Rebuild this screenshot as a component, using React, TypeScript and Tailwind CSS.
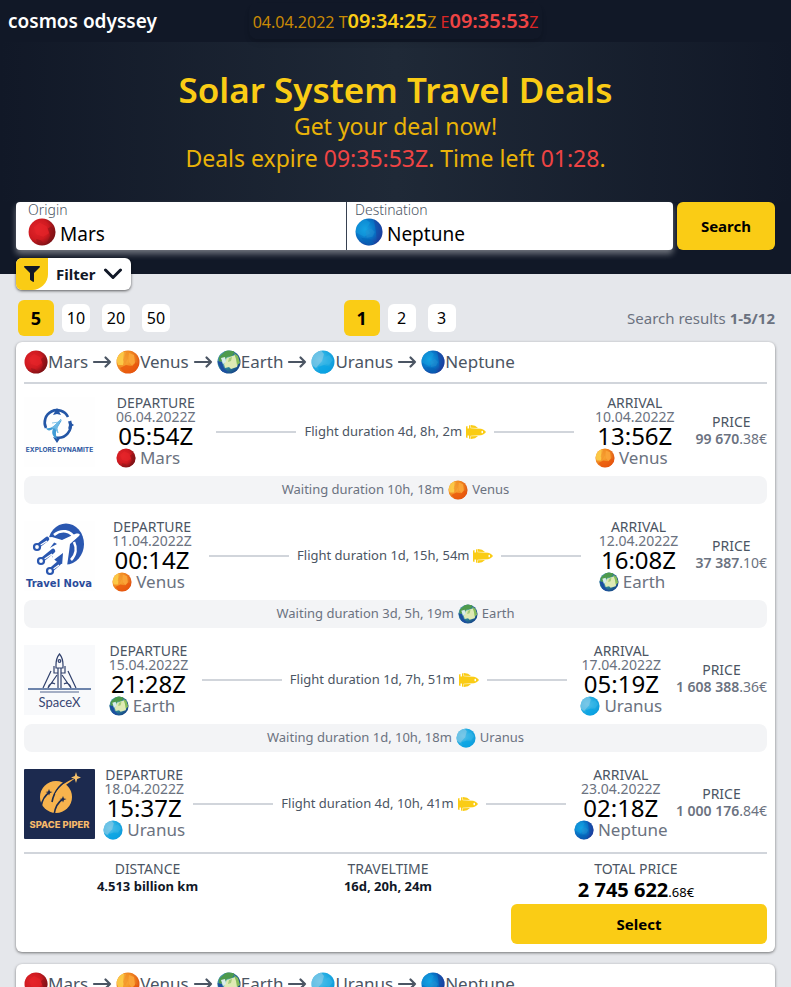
import { useId, type ReactNode } from "react";
import { FaFilter } from "react-icons/fa";

type PlanetName = "Mars" | "Venus" | "Earth" | "Uranus" | "Neptune";

const planetArt: Record<PlanetName, { light: string; mid: string; dark: string; marks: ReactNode }> = {
  Mars: {
    light: "#e2252b",
    mid: "#cf1a20",
    dark: "#701014",
    marks: (
      <>
        <path d="M5 8l5-4 6 3 2 6-5 3-6-2z" fill="#e8242a" opacity=".6" />
        <path d="M17 9l3-2 4 5-2 7-6 3 3-7z" fill="#7d1216" opacity=".5" />
        <path d="M7 18l4 1 3 4-6-1z" fill="#8e1519" opacity=".5" />
      </>
    ),
  },
  Venus: {
    light: "#fbb13a",
    mid: "#f28a22",
    dark: "#d9480f",
    marks: (
      <>
        <path d="M0 9l5-7 5 0-2 6-1 7-5 0z" fill="#fcd34d" opacity=".8" />
        <path d="M8 2l4 0 0 7-3 5-2-4z" fill="#f0902a" opacity=".6" />
        <path d="M4 18l6-3 5 1 4-4 4 3-5 8H9z" fill="#ea580c" opacity=".8" />
        <path d="M13 3l5 2 1 8-3 3-3-4z" fill="#fba53a" opacity=".9" />
      </>
    ),
  },
  Earth: {
    light: "#8fd0cf",
    mid: "#2a7f94",
    dark: "#123c86",
    marks: (
      <>
        <path d="M2 7l8-7 8 1-3 5-5 1-3 4-5 1z" fill="#4d9a4c" />
        <path d="M0 11l5 1 2 6 5 5-7-1z" fill="#1d4fa0" />
        <path d="M10 8l8-3 4 5-2 7-6 2-2-2-4 1-1-4z" fill="#dfeab4" />
        <path d="M4 8l4-1 1 5-3 2z" fill="#d8ecea" />
        <path d="M17 3l4 3 2 7-3 2-1-6z" fill="#86bd5a" />
        <path d="M12 8l3-1-1 4-3 1z" fill="#a5cc78" />
      </>
    ),
  },
  Uranus: {
    light: "#5cc3ea",
    mid: "#22ade3",
    dark: "#0a98da",
    marks: (
      <>
        <path d="M0 7l9-8 4 5-2 7-6 7-6-4z" fill="#8fcbe6" opacity=".6" />
        <path d="M12 8l6-3 4 5-4 5-6-2z" fill="#3bb8e8" opacity=".5" />
        <path d="M7 17l6-2 7 2-4 7H9z" fill="#08a4e4" opacity=".7" />
      </>
    ),
  },
  Neptune: {
    light: "#17a5e6",
    mid: "#0871c4",
    dark: "#1c3596",
    marks: (
      <>
        <path d="M0 7l8-7 5 4-3 5 3 4-5 3-8-4z" fill="#129fe0" opacity=".5" />
        <path d="M9 11l5-2 3 3-2 4-5 1z" fill="#2590d0" opacity=".5" />
        <path d="M16 0l9 6v9l-6 6-1-9z" fill="#1c3f9f" opacity=".5" />
        <path d="M5 17l8 1 4 4-6 2z" fill="#0464b5" opacity=".6" />
      </>
    ),
  },
};

function Planet({ name, className }: { name: PlanetName; className: string }) {
  const id = useId();
  const art = planetArt[name];
  return (
    <svg viewBox="0 0 24 24" className={`shrink-0 ${className}`} aria-hidden="true">
      <defs>
        <radialGradient id={`${id}g`} cx=".36" cy=".4" r=".68">
          <stop offset="0" stopColor={art.light} />
          <stop offset=".55" stopColor={art.mid} />
          <stop offset="1" stopColor={art.dark} />
        </radialGradient>
        <clipPath id={`${id}c`}>
          <circle cx="12" cy="12" r="11.5" />
        </clipPath>
      </defs>
      <g clipPath={`url(#${id}c)`}>
        <rect width="24" height="24" fill={`url(#${id}g)`} />
        {art.marks}
      </g>
    </svg>
  );
}

function Arrow() {
  return (
    <svg viewBox="0 0 20 14" className="mx-1 h-3.5 w-5 shrink-0" fill="none" stroke="#4b5563" strokeWidth="2.2" strokeLinecap="round" strokeLinejoin="round" aria-hidden="true">
      <path d="M2 7h16M13.500 2.500L18 7l-4.500 4.500" />
    </svg>
  );
}

function Rocket() {
  return (
    <svg viewBox="0 0 20 14" className="h-3.5 w-5 shrink-0" fill="#facc15" aria-hidden="true">
      <path d="M0 1.500L1.500 1v2.500H3V.5L4.500 0v3.200L10 3.500l5 .2c2.200.4 4 2 5 3.300-1 1.300-2.800 2.900-5 3.300l-5 .2-5.500.3V14L3 13.500v-3H1.500V13L0 12.500z" />
      <path d="M5 0l4 .8L12 3l-7-.3zM5 14l4-.8 3-2.200-7 .3z" />
      <path d="M15.500 6a1.100 1.100 0 1 1 0 2z" fill="#fff" />
    </svg>
  );
}

function ExploreDynamite() {
  return (
    <svg viewBox="0 0 71 70" className="h-[70px] w-[71px] shrink-0" role="img" aria-label="Explore Dynamite">
      <rect width="71" height="70" fill="#fefefe" />
      <path d="M22 31a12 12 0 0 1 22-11M46 24a12.500 12.500 0 0 1-14 16.500" fill="none" stroke="#2456a6" strokeWidth="2.600" />
      <path d="M33 11l4 7-4-1-4 1zM50 28l-6 4 1-4-1-4zM33 46l-4-6 4 1 4-1z" fill="#2456a6" />
      <path d="M22 31c5 1 8-2 11-5l5-3-3 5c-3 4-4 8-2 14-4-2-6-6-4-10-3 2-6 2-7-1z" fill="#3f9bd6" />
      <path d="M28 31l9-9-4 9 1 5-3-5zM28 26l7-1" stroke="#6fb9e4" fill="#6fb9e4" strokeWidth=".8" />
      <text x="35.500" y="55" textAnchor="middle" fontSize="6.6" fontWeight="700" fill="#2d57a0" fontFamily="Inter, sans-serif">EXPLORE DYNAMITE</text>
    </svg>
  );
}

function TravelNova() {
  return (
    <svg viewBox="0 0 71 70" className="h-[70px] w-[71px] shrink-0" role="img" aria-label="Travel Nova">
      <rect width="71" height="70" fill="#fefefe" />
      <ellipse cx="42" cy="23" rx="18" ry="20.500" fill="#2a57b0" />
      <path d="M30 14c7-6 17-5 21 4M50 21c3 6 2 13-3 18" fill="none" stroke="#fff" strokeWidth="2.600" />
      <path d="M18 40V19l7-3 7 3-6 8 8 2-6 7z" fill="#fff" />
      <path d="M22 17l6-1 10 3 13-6c4-1 6 0 4 2L46 23l-1 8-2 14h-5l1-13-12 9 3-10-8-2 11-6z" fill="#fff" />
      <path d="M14 25l9-7M18 39l11-9M27 49l8-7" stroke="#2a57b0" strokeWidth="4.500" strokeLinecap="round" />
      <path d="M15 25l8-5M19 39l9-6M28 49l7-5" stroke="#fff" strokeWidth="1.300" />
      <g fill="#fff" stroke="#2a57b0" strokeWidth="2.200">
        <circle cx="13" cy="26" r="3" />
        <circle cx="17" cy="40" r="3" />
        <circle cx="26" cy="50" r="3" />
      </g>
      <text x="35" y="66" textAnchor="middle" fontSize="10" fontWeight="700" fill="#2a4b9b" fontFamily="'DejaVu Sans', sans-serif">Travel Nova</text>
    </svg>
  );
}

function SpaceX() {
  return (
    <svg viewBox="0 0 71 70" className="h-[70px] w-[71px] shrink-0" role="img" aria-label="SpaceX">
      <rect width="71" height="70" fill="#f8f9fb" />
      <g fill="none" stroke="#30406c" strokeWidth="1.200">
        <path d="M32 20c0-5 1-8 3.500-11C38 12 39 15 39 20v3h-7zM34 23v20M37 23v20" />
        <circle cx="35.500" cy="16" r="1.300" />
        <path d="M30 21v7h4M41 21v7h-4M27 26L19 43M44 26l8 17M33 30l-9 13M38 30l9 13M24 43c1-4 4-6 7-4M47 43c-1-4-4-6-7-4" />
        <path d="M4 44h63" strokeWidth="1.600" stroke="#3f5d91" />
        <path d="M16 47h39" stroke="#50658e" />
      </g>
      <text x="35.500" y="62" textAnchor="middle" fontSize="13" fill="#384773" fontFamily="Lato, sans-serif">SpaceX</text>
    </svg>
  );
}

function SpacePiper() {
  return (
    <svg viewBox="0 0 71 70" className="h-[70px] w-[71px] shrink-0" role="img" aria-label="Space Piper">
      <rect width="71" height="70" rx="1" fill="#1c2a4f" />
      <circle cx="32" cy="28" r="16" fill="#f7b34d" />
      <g fill="none" stroke="#1c2a4f" strokeWidth="1.600">
        <path d="M28 33c2-11 9-20 20-23M17 38c1-7 4-12 9-15M30 46c1-8 4-13 9-16" />
      </g>
      <path d="M31 25c4-7 11-13 21-16-8 5-14 9-18 16z" fill="#f7b34d" />
      <path d="M52 3l1.200 4L57 8.500 53.200 10 52 14l-1.200-4L47 8.500 50.800 7z" fill="#f7c26b" />
      <path d="M25 20l1 2.500 2.500.5-2.500 1-1 2.500-1-2.500-2.500-1 2.500-.5zM39 27l1 2.500 2.500.5-2.500 1-1 2.500-1-2.500-2.500-1 2.500-.5z" fill="#1c2a4f" />
      <text x="35.500" y="59" textAnchor="middle" fontSize="9.4" fontWeight="800" fill="#f7b96a" fontFamily="Inter, sans-serif">SPACE PIPER</text>
    </svg>
  );
}

type Stop = { date: string; time: string; planet: PlanetName };
type Leg = {
  logo: ReactNode;
  from: Stop;
  to: Stop;
  duration: string;
  price: string;
  cents: string;
  wait?: string;
};

const legs: Leg[] = [
  {
    logo: <ExploreDynamite />,
    from: { date: "06.04.2022Z", time: "05:54Z", planet: "Mars" },
    to: { date: "10.04.2022Z", time: "13:56Z", planet: "Venus" },
    duration: "4d, 8h, 2m",
    price: "99 670",
    cents: ".38€",
    wait: "10h, 18m",
  },
  {
    logo: <TravelNova />,
    from: { date: "11.04.2022Z", time: "00:14Z", planet: "Venus" },
    to: { date: "12.04.2022Z", time: "16:08Z", planet: "Earth" },
    duration: "1d, 15h, 54m",
    price: "37 387",
    cents: ".10€",
    wait: "3d, 5h, 19m",
  },
  {
    logo: <SpaceX />,
    from: { date: "15.04.2022Z", time: "21:28Z", planet: "Earth" },
    to: { date: "17.04.2022Z", time: "05:19Z", planet: "Uranus" },
    duration: "1d, 7h, 51m",
    price: "1 608 388",
    cents: ".36€",
    wait: "1d, 10h, 18m",
  },
  {
    logo: <SpacePiper />,
    from: { date: "18.04.2022Z", time: "15:37Z", planet: "Uranus" },
    to: { date: "23.04.2022Z", time: "02:18Z", planet: "Neptune" },
    duration: "4d, 10h, 41m",
    price: "1 000 176",
    cents: ".84€",
  },
];

const route: PlanetName[] = ["Mars", "Venus", "Earth", "Uranus", "Neptune"];

function StopInfo({ label, stop }: { label: string; stop: Stop }) {
  return (
    <div className="flex flex-col items-center whitespace-nowrap">
      <span className="text-sm leading-[14px] text-[#4b5563]">{label}</span>
      <span className="text-sm leading-[14px] text-[#6b7280]">{stop.date}</span>
      <span className="text-2xl leading-6 text-black">{stop.time}</span>
      <span className="flex items-center gap-1 self-start text-[17px] leading-5 text-[#6b7280]">
        <Planet name={stop.planet} className="size-5" />
        {stop.planet}
      </span>
    </div>
  );
}

function LegRow({ leg }: { leg: Leg }) {
  return (
    <>
      <div className="flex items-center justify-between py-2">
        {leg.logo}
        <StopInfo label="DEPARTURE" stop={leg.from} />
        <div className="flex items-center gap-2">
          <span className="h-0.5 w-20 bg-[#d1d5db]" />
          <span className="flex items-center gap-1 text-[13px] whitespace-nowrap text-[#4b5563]">
            Flight duration {leg.duration}
            <Rocket />
          </span>
          <span className="h-0.5 w-20 bg-[#d1d5db]" />
        </div>
        <StopInfo label="ARRIVAL" stop={leg.to} />
        <div className="flex flex-col items-center pb-1 text-sm leading-[17px] whitespace-nowrap">
          <span className="text-[#4b5563]">PRICE</span>
          <span className="text-[#6b7280]">
            <b className="font-semibold">{leg.price}</b>
            {leg.cents}
          </span>
        </div>
      </div>
      {leg.wait && (
        <div className="mb-2 flex h-7 items-center justify-center gap-1 rounded-lg bg-[#f3f4f6] text-[13px] text-[#6b7280]">
          Waiting duration {leg.wait}
          <Planet name={leg.to.planet} className="size-5" />
          {leg.to.planet}
        </div>
      )}
    </>
  );
}

function RouteHeader() {
  return (
    <div className="flex items-center border-b-2 border-[#d1d5db] pb-2 text-[17px] leading-6 text-[#4b5563]">
      {route.map((name, index) => (
        <span key={name} className="flex items-center">
          {index > 0 && <Arrow />}
          <Planet name={name} className="size-6" />
          {name}
        </span>
      ))}
    </div>
  );
}

function Pager({ label, items }: { label: string; items: number[] }) {
  return (
    <nav aria-label={label} className="flex">
      {items.map((item, index) => (
        <span key={item} className="flex size-10 items-center justify-center">
          {index === 0 ? (
            <button type="button" className="size-9 rounded-md bg-[#facc15] text-lg font-bold text-black">{item}</button>
          ) : (
            <button type="button" className="size-7 rounded-md bg-white text-base leading-7 text-black">{item}</button>
          )}
        </span>
      ))}
    </nav>
  );
}

export default function App() {
  return (
    <div className="h-screen overflow-hidden bg-[#e5e7eb] font-['Noto_Sans',sans-serif] text-black">
      <header className="grid h-[42px] grid-cols-[1fr_auto_1fr] items-center bg-[#111827] px-2">
        <a href="#" className="text-[19px] leading-none font-semibold text-white">cosmos odyssey</a>
        <div className="flex h-9 items-baseline rounded-lg px-1 text-base leading-9 whitespace-pre text-[#ca8a04] shadow-md">
          <span>04.04.2022 T</span>
          <b className="text-xl leading-9 font-semibold text-[#facc15]">09:34:25</b>
          <span>Z </span>
          <span className="text-[#dc2626]">E</span>
          <b className="text-xl leading-9 font-semibold text-[#ef4444]">09:35:53</b>
          <span className="text-[#dc2626]">Z</span>
        </div>
      </header>

      <section className="bg-linear-to-r/srgb from-[#111827] via-[#1f2937] to-[#111827] py-7 text-center text-[23px] leading-8 text-[#eab308]">
        <h1 className="text-[35px] leading-10 font-semibold text-[#facc15]">Solar System Travel Deals</h1>
        <p>Get your deal now!</p>
        <p>
          Deals expire <span className="text-[#ef4444]">09:35:53Z</span>. Time left <span className="text-[#ef4444]">01:28</span>.
        </p>
      </section>

      <form className="flex gap-1 bg-[#111827] px-4 pb-6" onSubmit={(event) => event.preventDefault()}>
        <div className="flex h-12 min-w-0 flex-1 rounded-sm bg-white shadow-[0_4px_6px_rgba(255,255,255,0.4)]">
          <div className="min-w-0 grow basis-1.5 border-r border-[#374151] pl-3">
            <label htmlFor="origin" className="block text-sm leading-4 font-light text-[#4b5563]">Origin</label>
            <div className="flex items-start gap-1">
              <Planet name="Mars" className="size-7" />
              <input id="origin" defaultValue="Mars" className="h-8 w-full min-w-0 text-[19px] outline-none" />
            </div>
          </div>
          <div className="min-w-0 grow basis-0 pl-2">
            <label htmlFor="destination" className="block text-sm leading-4 font-light text-[#4b5563]">Destination</label>
            <div className="flex items-start gap-1">
              <Planet name="Neptune" className="size-7" />
              <input id="destination" defaultValue="Neptune" className="h-8 w-full min-w-0 text-[19px] outline-none" />
            </div>
          </div>
        </div>
        <button type="submit" className="h-12 rounded-md bg-[#facc15] px-6 text-[15px] font-bold">Search</button>
      </form>

      <main className="-mt-4 px-4">
        <button type="button" className="flex h-8 items-center rounded-md bg-white pr-2 text-[15px] font-bold text-[#111827] shadow-[0_1px_3px_rgba(0,0,0,0.6)]">
          <span className="mr-2 flex size-8 items-center justify-center rounded-l-md rounded-br-2xl bg-[#facc15]">
            <FaFilter className="size-4" />
          </span>
          Filter
          <svg viewBox="0 0 20 12" className="ml-2 h-3 w-5" fill="none" stroke="currentColor" strokeWidth="3" strokeLinecap="round" strokeLinejoin="round" aria-hidden="true">
            <path d="M2.500 2l7.500 7.500L17.500 2" />
          </svg>
        </button>

        <div className="mt-2 mb-1 flex items-center justify-between">
          <Pager label="Results per page" items={[5, 10, 20, 50]} />
          <Pager label="Pages" items={[1, 2, 3]} />
          <p className="text-[15px] text-[#6b7280]">
            Search results <b className="font-bold">1-5/12</b>
          </p>
        </div>

        <article className="mb-3 rounded-md bg-white p-2 shadow-[0_1px_3px_rgba(0,0,0,0.5)]">
          <RouteHeader />
          <div className="py-1">
            {legs.map((leg) => (
              <LegRow key={leg.from.date} leg={leg} />
            ))}
          </div>
          <div className="border-t-2 border-[#d1d5db] pt-2">
            <dl className="flex justify-around text-center text-sm">
              <div>
                <dt className="leading-[14px] text-[#4b5563]">DISTANCE</dt>
                <dd className="text-[13px] leading-5 font-bold text-[#111827]">4.513 billion km</dd>
              </div>
              <div>
                <dt className="leading-[14px] text-[#4b5563]">TRAVELTIME</dt>
                <dd className="text-[13px] leading-5 font-bold text-[#111827]">16d, 20h, 24m</dd>
              </div>
              <div>
                <dt className="leading-[14px] text-[#4b5563]">TOTAL PRICE</dt>
                <dd className="h-7 text-[13px] leading-7">
                  <b className="text-xl leading-7 font-bold">2 745 622</b>.68€
                </dd>
              </div>
            </dl>
            <button type="button" className="ml-auto block h-10 w-64 rounded-md bg-[#facc15] text-[15px] font-bold">Select</button>
          </div>
        </article>

        <article className="rounded-md bg-white p-2 shadow-[0_1px_3px_rgba(0,0,0,0.5)]">
          <RouteHeader />
        </article>
      </main>
    </div>
  );
}
